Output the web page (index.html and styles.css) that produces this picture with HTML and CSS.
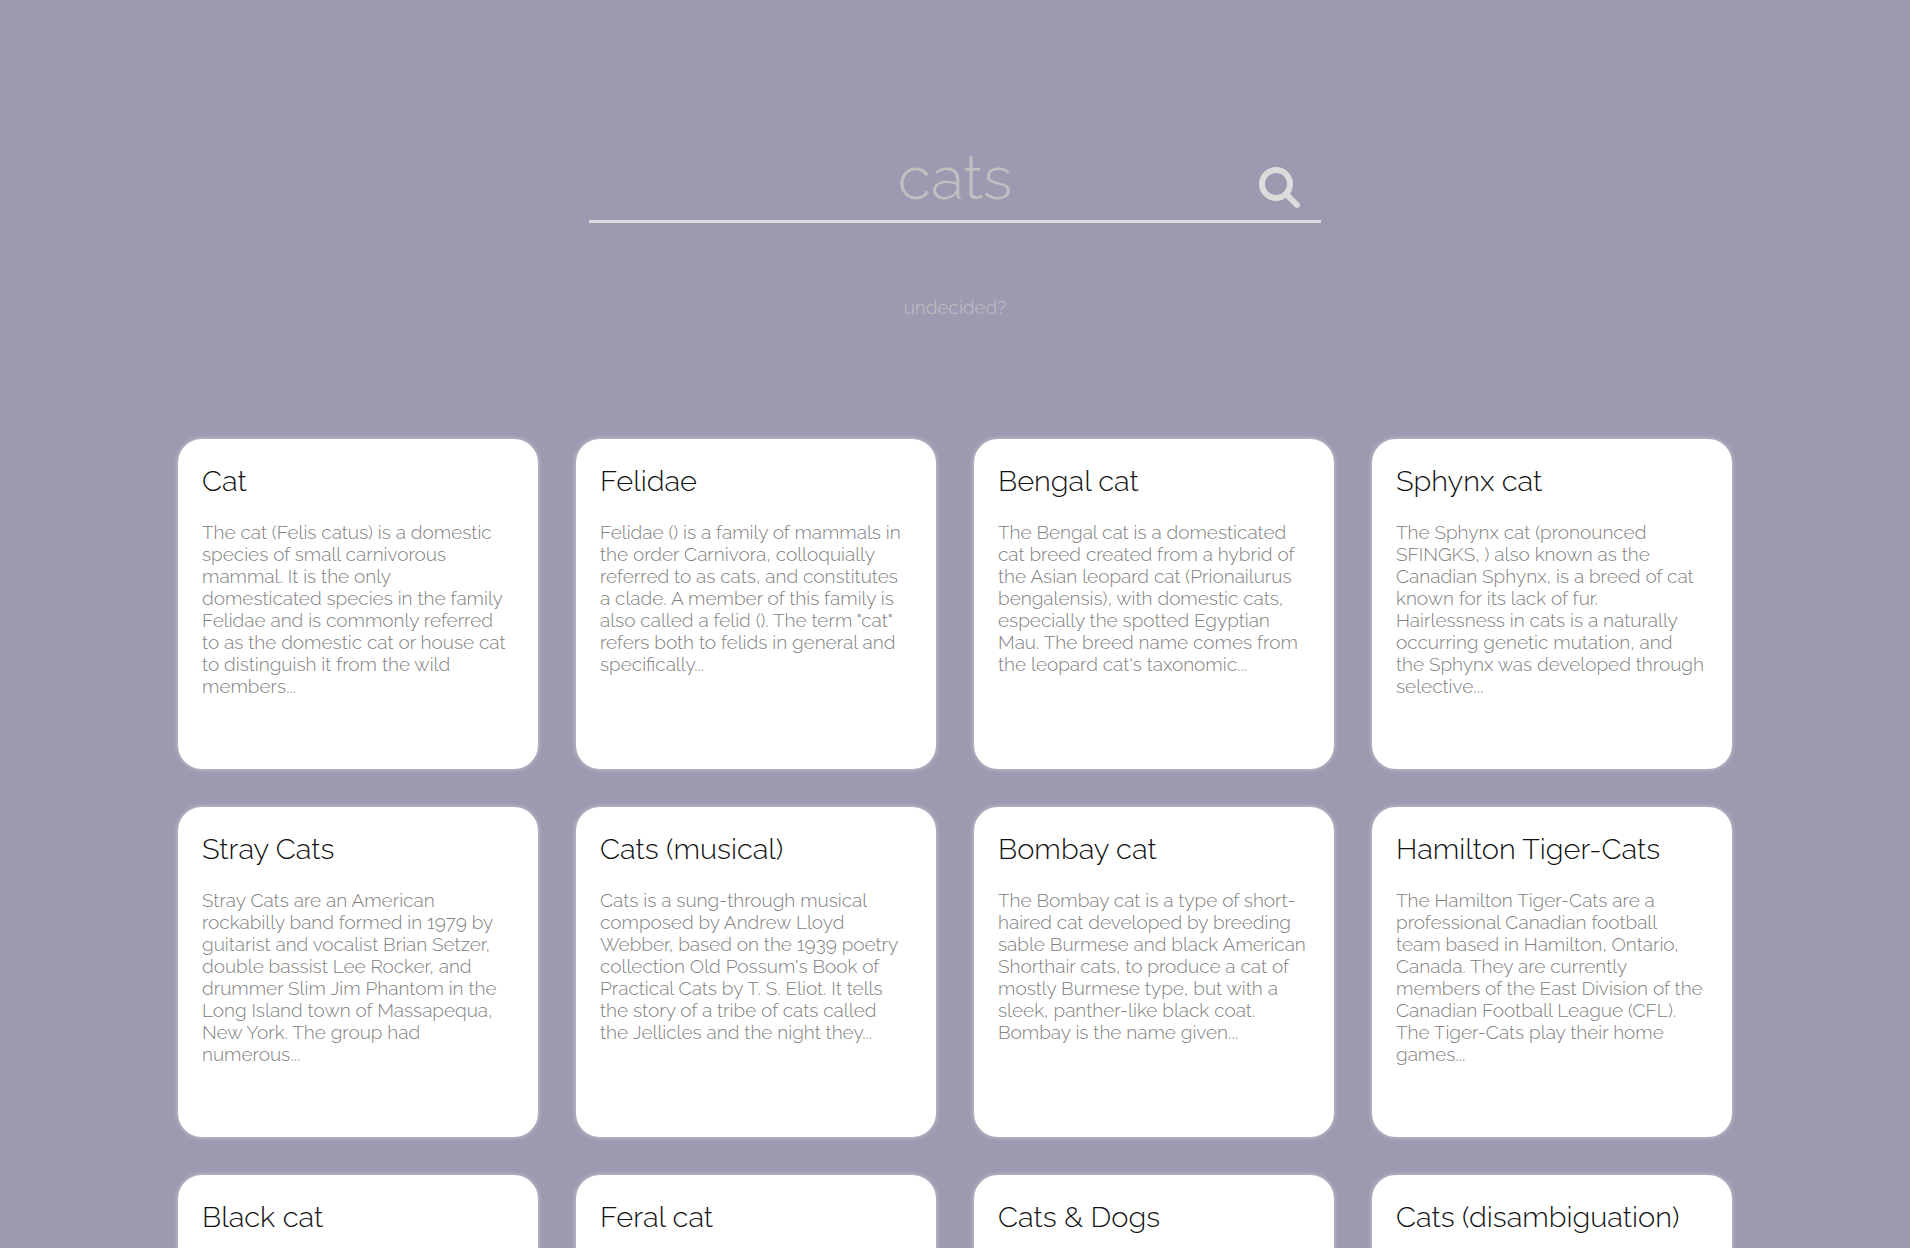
FILE: index.html
```html
<!DOCTYPE html>
<html lang="en">
<head>
<meta charset="utf-8">
<meta name="viewport" content="width=device-width, initial-scale=1">
<title>Wiki search</title>
<link rel="stylesheet" href="styles.css">
</head>
<body>
<main class="page">
  <header class="search">
    <form class="search-form" role="search">
      <input class="search-input" type="text" name="q" value="cats" aria-label="Search" autocomplete="off" spellcheck="false">
      <button class="search-button" type="submit" aria-label="Search">
        <svg class="search-icon" viewBox="0 0 42 42" aria-hidden="true">
          <circle cx="17" cy="17" r="14" fill="none" stroke="currentColor" stroke-width="6"/>
          <path d="M27 27L38 38" fill="none" stroke="currentColor" stroke-width="6" stroke-linecap="round"/>
        </svg>
      </button>
    </form>
    <a class="random-link" href="#random">undecided?</a>
  </header>

  <section class="results" aria-label="Results">
    <article class="card">
      <h2 class="card-title">Cat</h2>
      <p class="card-text">The cat (Felis catus) is a domestic<br>species of small carnivorous<br>mammal. It is the only<br>domesticated species in the family<br>Felidae and is commonly referred<br>to as the domestic cat or house cat<br>to distinguish it from the wild<br>members...</p>
    </article>
    <article class="card">
      <h2 class="card-title">Felidae</h2>
      <p class="card-text">Felidae () is a family of mammals in<br>the order Carnivora, colloquially<br>referred to as cats, and constitutes<br>a clade. A member of this family is<br>also called a felid (). The term "cat"<br>refers both to felids in general and<br>specifically...</p>
    </article>
    <article class="card">
      <h2 class="card-title">Bengal cat</h2>
      <p class="card-text">The Bengal cat is a domesticated<br>cat breed created from a hybrid of<br>the Asian leopard cat (Prionailurus<br>bengalensis), with domestic cats,<br>especially the spotted Egyptian<br>Mau. The breed name comes from<br>the leopard cat's taxonomic...</p>
    </article>
    <article class="card">
      <h2 class="card-title">Sphynx cat</h2>
      <p class="card-text">The Sphynx cat (pronounced<br>SFINGKS, ) also known as the<br>Canadian Sphynx, is a breed of cat<br>known for its lack of fur.<br>Hairlessness in cats is a naturally<br>occurring genetic mutation, and<br>the Sphynx was developed through<br>selective...</p>
    </article>
    <article class="card">
      <h2 class="card-title">Stray Cats</h2>
      <p class="card-text">Stray Cats are an American<br>rockabilly band formed in 1979 by<br>guitarist and vocalist Brian Setzer,<br>double bassist Lee Rocker, and<br>drummer Slim Jim Phantom in the<br>Long Island town of Massapequa,<br>New York. The group had<br>numerous...</p>
    </article>
    <article class="card">
      <h2 class="card-title">Cats (musical)</h2>
      <p class="card-text">Cats is a sung-through musical<br>composed by Andrew Lloyd<br>Webber, based on the 1939 poetry<br>collection Old Possum's Book of<br>Practical Cats by T. S. Eliot. It tells<br>the story of a tribe of cats called<br>the Jellicles and the night they...</p>
    </article>
    <article class="card">
      <h2 class="card-title">Bombay cat</h2>
      <p class="card-text">The Bombay cat is a type of short-<br>haired cat developed by breeding<br>sable Burmese and black American<br>Shorthair cats, to produce a cat of<br>mostly Burmese type, but with a<br>sleek, panther-like black coat.<br>Bombay is the name given...</p>
    </article>
    <article class="card">
      <h2 class="card-title">Hamilton Tiger-Cats</h2>
      <p class="card-text">The Hamilton Tiger-Cats are a<br>professional Canadian football<br>team based in Hamilton, Ontario,<br>Canada. They are currently<br>members of the East Division of the<br>Canadian Football League (CFL).<br>The Tiger-Cats play their home<br>games...</p>
    </article>
    <article class="card">
      <h2 class="card-title">Black cat</h2>
    </article>
    <article class="card">
      <h2 class="card-title">Feral cat</h2>
    </article>
    <article class="card">
      <h2 class="card-title">Cats &amp; Dogs</h2>
    </article>
    <article class="card">
      <h2 class="card-title">Cats (disambiguation)</h2>
    </article>
  </section>
</main>
</body>
</html>
```
FILE: styles.css
```css
*, *::before, *::after {
  box-sizing: border-box;
}

body {
  margin: 0;
  background: #9c99b1;
  color: #111;
  font-family: Raleway, Lato, "Open Sans", sans-serif;
  font-weight: 300;
}

.page {
  height: 100vh;
  overflow-y: auto;
  scrollbar-width: none;
  padding: 140px 24px 60px;
}

.search {
  display: flex;
  flex-direction: column;
  align-items: center;
  gap: 68px;
  margin-bottom: 116px;
}

.search-form {
  display: grid;
  grid-template-columns: 82px 1fr 82px;
  align-items: center;
  width: 100%;
  max-width: 732px;
  border-bottom: 3px solid #dcdcdc;
}

.search-input {
  grid-column: 2;
  width: 100%;
  height: 80px;
  padding: 0 0 6px;
  border: 0;
  outline: 0;
  background: transparent;
  color: #c0c0c0;
  font: inherit;
  font-size: 61px;
  text-align: center;
}

.search-button {
  display: flex;
  justify-content: center;
  padding: 16px 0 0;
  border: 0;
  background: transparent;
  color: #dcdcdc;
  cursor: pointer;
}

.search-icon {
  width: 42px;
  height: 42px;
}

.random-link {
  color: #c0c0c0;
  font-size: 19px;
  line-height: 32px;
  text-decoration: none;
}

.results {
  display: grid;
  grid-template-columns: repeat(auto-fill, minmax(320px, 1fr));
  gap: 38px;
  max-width: 1554px;
  margin: 0 auto;
}

.card {
  min-height: 330px;
  padding: 24px;
  border-radius: 24px;
  background: #fff;
  box-shadow: 0 0 5px rgba(220, 220, 220, 0.8);
}

.card-title {
  margin: 0 0 22px;
  font-size: 29px;
  font-weight: 300;
  line-height: 36px;
}

.card-text {
  margin: 0;
  color: #808080;
  font-size: 19px;
  line-height: 22px;
  white-space: nowrap;
}
```
